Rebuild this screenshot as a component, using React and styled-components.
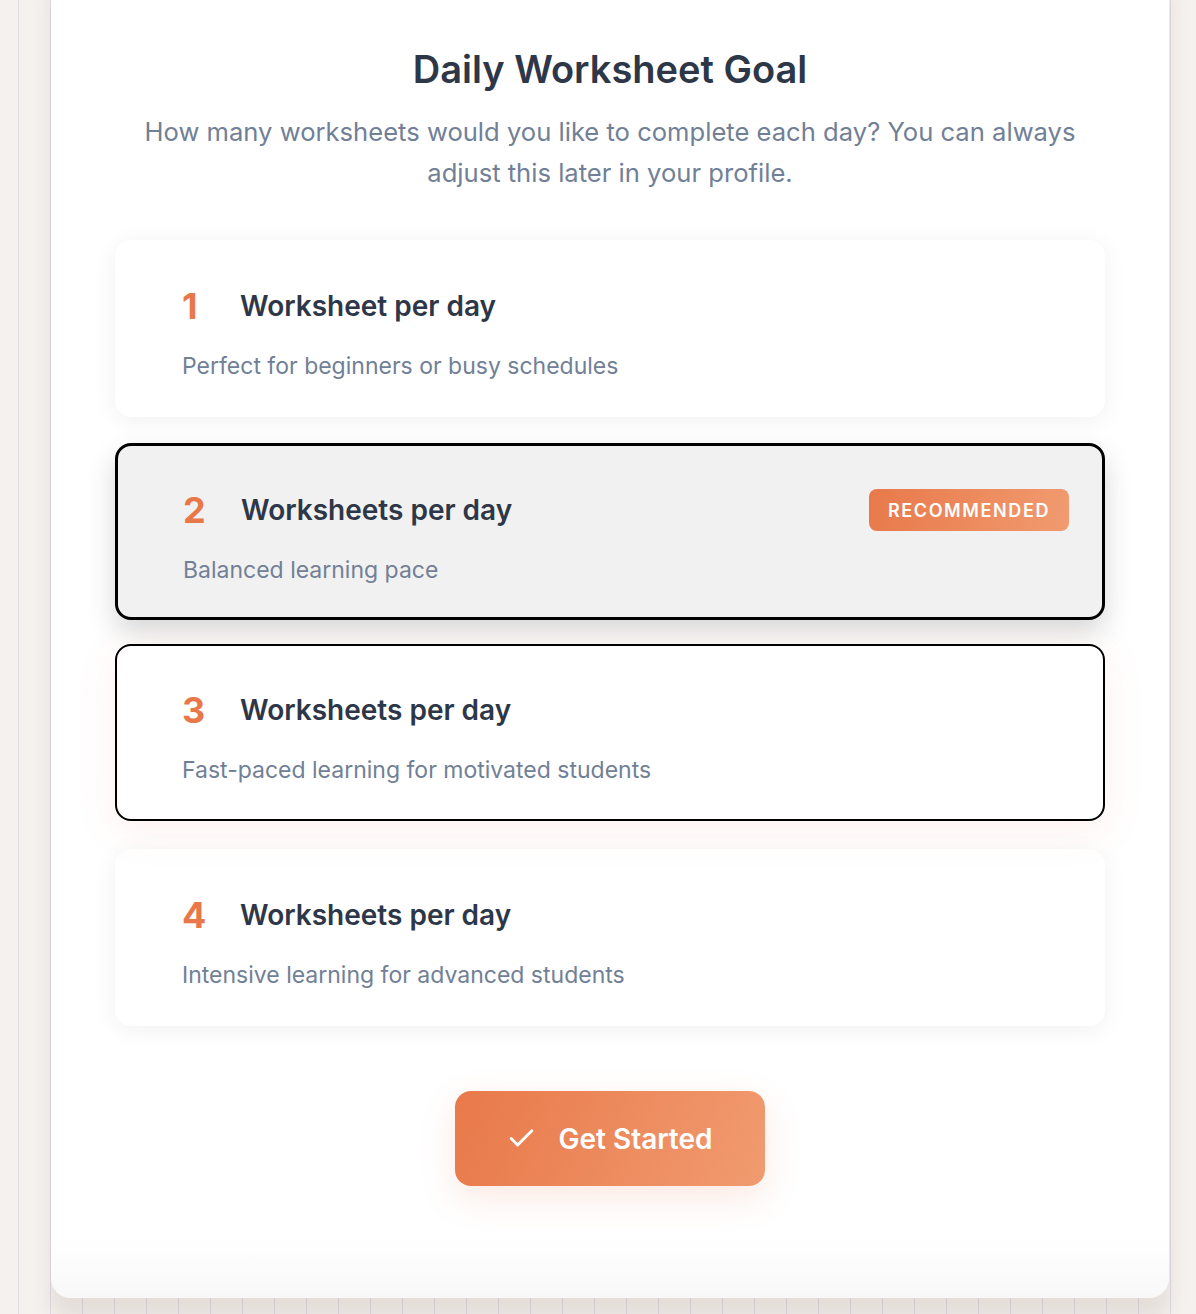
import React, { useState } from 'react';
import styled, { createGlobalStyle } from 'styled-components';
import { Check } from 'lucide-react';

const GlobalStyle = createGlobalStyle`
  * {
    box-sizing: border-box;
  }

  body {
    margin: 0;
    font-family: Inter, "Open Sans", "Liberation Sans", sans-serif;
    background-color: #f5f1ee;
    background-image: repeating-linear-gradient(
      90deg,
      transparent 0,
      transparent 18px,
      rgba(214, 208, 224, 0.7) 18px,
      rgba(214, 208, 224, 0.7) 19px,
      transparent 19px,
      transparent 32px
    );
    overflow: hidden;
  }
`;

const Page = styled.div`
  min-height: 1314px;
  padding: 0 27px 17px 51px;
`;

const Sheet = styled.main`
  width: 1118px;
  margin-top: -40px;
  padding: 88px 64px 112px;
  border-radius: 20px;
  background: linear-gradient(180deg, #ffffff calc(100% - 60px), #f8f8f8 100%);
  box-shadow: 0 22px 20px rgba(90, 60, 40, 0.1);
  display: flex;
  flex-direction: column;
  align-items: center;
`;

const Title = styled.h1`
  margin: 0;
  font-size: 38px;
  line-height: 43px;
  font-weight: 600;
  color: #2d3748;
  text-align: center;
`;

const Subtitle = styled.p`
  margin: 20px 0 0;
  max-width: 990px;
  font-size: 25.6px;
  line-height: 41px;
  color: #718096;
  text-align: center;
`;

const OptionList = styled.div`
  width: 100%;
  margin-top: 47px;
  display: flex;
  flex-direction: column;
  gap: 26px;
`;

const Option = styled.div`
  height: 177px;
  padding: 38px 33px 0 65px;
  cursor: pointer;
  border-radius: 16px;
  border: ${p => (p.$selected ? '3px solid #000' : p.$hovered ? '2px solid #000' : '2px solid transparent')};
  background: ${p => (p.$selected ? '#f1f1f1' : '#ffffff')};
  transform: ${p => (p.$hovered ? 'translateY(-2px)' : 'none')};
  box-shadow: ${p =>
    p.$selected
      ? '0 12px 28px rgba(0, 0, 0, 0.16)'
      : p.$hovered
      ? '0 10px 40px rgba(232, 120, 74, 0.1)'
      : '0 4px 24px rgba(0, 0, 0, 0.06)'};
`;

const OptionHead = styled.div`
  display: flex;
  align-items: center;
  height: 52px;
`;

const Count = styled.span`
  flex: 0 0 58px;
  font-size: 36px;
  font-weight: 700;
  color: #e8784a;
`;

const OptionTitle = styled.span`
  font-size: 28px;
  font-weight: 600;
  color: #2d3748;
`;

const Badge = styled.span`
  margin-left: auto;
  height: 42px;
  padding: 0 19px;
  display: inline-flex;
  align-items: center;
  border-radius: 8px;
  background: linear-gradient(100deg, #e8794a 0%, #f19b70 100%);
  color: #ffffff;
  font-size: 18px;
  font-weight: 600;
  letter-spacing: 1.6px;
`;

const OptionText = styled.p`
  margin: 18px 0 0;
  font-size: 23px;
  line-height: 33px;
  color: #718096;
`;

const StartButton = styled.button`
  margin-top: 65px;
  height: 95px;
  padding: 0 52px 0 51px;
  display: inline-flex;
  align-items: center;
  gap: 21px;
  border: none;
  border-radius: 16px;
  background: linear-gradient(110deg, #e8794a 0%, #f19b70 100%);
  color: #ffffff;
  font-family: inherit;
  font-size: 28px;
  font-weight: 600;
  cursor: pointer;
  box-shadow: 0 12px 36px rgba(232, 120, 74, 0.16);
`;

const options = [
  { n: 1, label: 'Worksheet per day', text: 'Perfect for beginners or busy schedules' },
  { n: 2, label: 'Worksheets per day', text: 'Balanced learning pace', recommended: true },
  { n: 3, label: 'Worksheets per day', text: 'Fast-paced learning for motivated students' },
  { n: 4, label: 'Worksheets per day', text: 'Intensive learning for advanced students' },
];

const App = () => {
  const [goal, setGoal] = useState(2);
  const [hovered, setHovered] = useState(3);

  return (
    <Page>
      <GlobalStyle />
      <Sheet>
        <Title>Daily Worksheet Goal</Title>
        <Subtitle>
          How many worksheets would you like to complete each day? You can always adjust this later in your profile.
        </Subtitle>
        <OptionList>
          {options.map(o => (
            <Option
              key={o.n}
              role="button"
              $selected={goal === o.n}
              $hovered={hovered === o.n && goal !== o.n}
              onMouseEnter={() => setHovered(o.n)}
              onClick={() => setGoal(o.n)}
            >
              <OptionHead>
                <Count>{o.n}</Count>
                <OptionTitle>{o.label}</OptionTitle>
                {o.recommended && <Badge>RECOMMENDED</Badge>}
              </OptionHead>
              <OptionText>{o.text}</OptionText>
            </Option>
          ))}
        </OptionList>
        <StartButton>
          <Check size={31} strokeWidth={2.2} />
          Get Started
        </StartButton>
      </Sheet>
    </Page>
  );
};

export default App;
